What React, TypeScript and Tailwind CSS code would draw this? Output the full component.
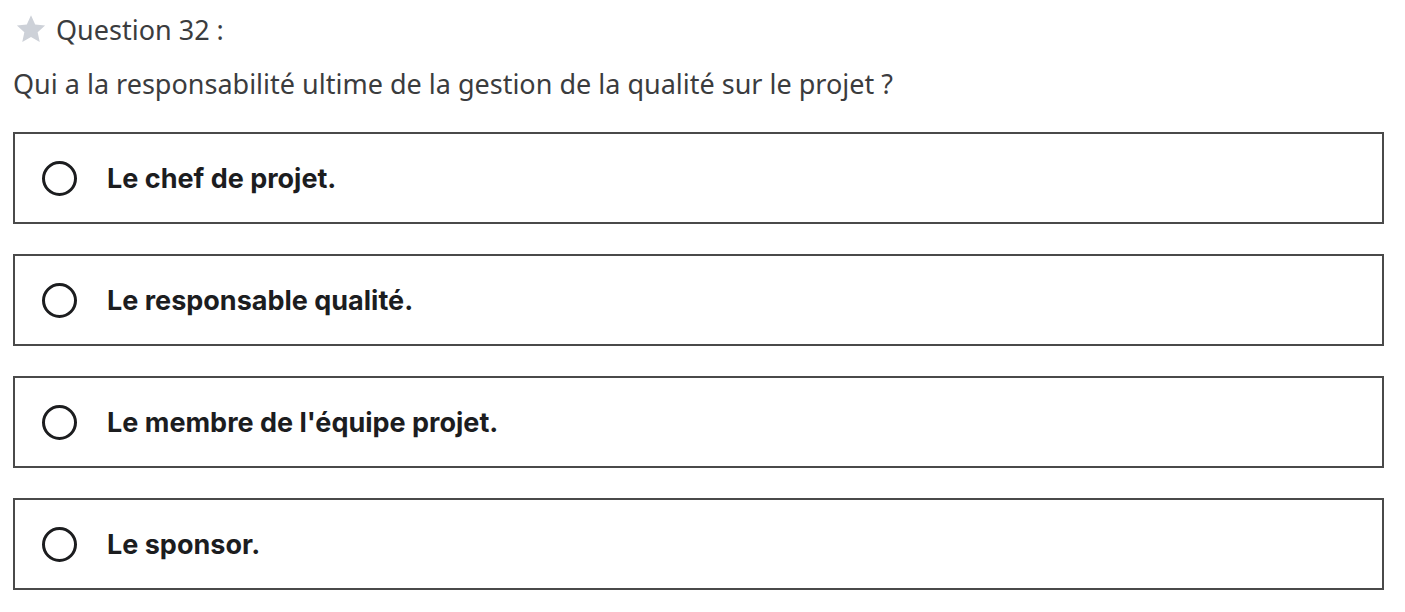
import React from "react";

const options = [
  "Le chef de projet.",
  "Le responsable qualité.",
  "Le membre de l'équipe projet.",
  "Le sponsor.",
];

export default function App() {
  return (
    <div className="w-[1405px] h-[612px] bg-white overflow-hidden">
      <div
        className="flex items-center h-[30px] mt-[15px] pl-[15px] gap-[9px] text-[#3b3c3e] text-[27px]"
        style={{ fontFamily: "'Noto Sans', sans-serif" }}
      >
        <svg width="32" height="30" viewBox="0 0 24 23" className="mt-[-2px]">
          <path d="M12 1l3.2 7 7.6.8-5.7 5.1 1.6 7.6L12 17.6l-6.7 3.9 1.6-7.6-5.7-5.1 7.6-.8z" fill="#cdd1d8" />
        </svg>
        <span>Question 32 :</span>
      </div>
      <div
        className="mt-[24px] pl-[13px] text-[27px] text-[#3b3c3e] h-[30px] leading-[30px]"
        style={{ fontFamily: "'Noto Sans', sans-serif" }}
      >
        Qui a la responsabilité ultime de la gestion de la qualité sur le projet ?
      </div>
      <div className="flex flex-col gap-[30px] mt-[33px] ml-[13px] w-[1371px]">
        {options.map((o) => (
          <div key={o} className="h-[92px] border-2 border-[#4a4a4a] flex items-center pl-[27px] gap-[30px]">
            <div className="w-[35px] h-[35px] rounded-full border-[3px] border-[#1c1d1f]" />
            <span
              className="font-bold text-[27px] text-[#1c1d1f] leading-none"
              style={{ fontFamily: "Inter, sans-serif" }}
            >
              {o}
            </span>
          </div>
        ))}
      </div>
    </div>
  );
}
